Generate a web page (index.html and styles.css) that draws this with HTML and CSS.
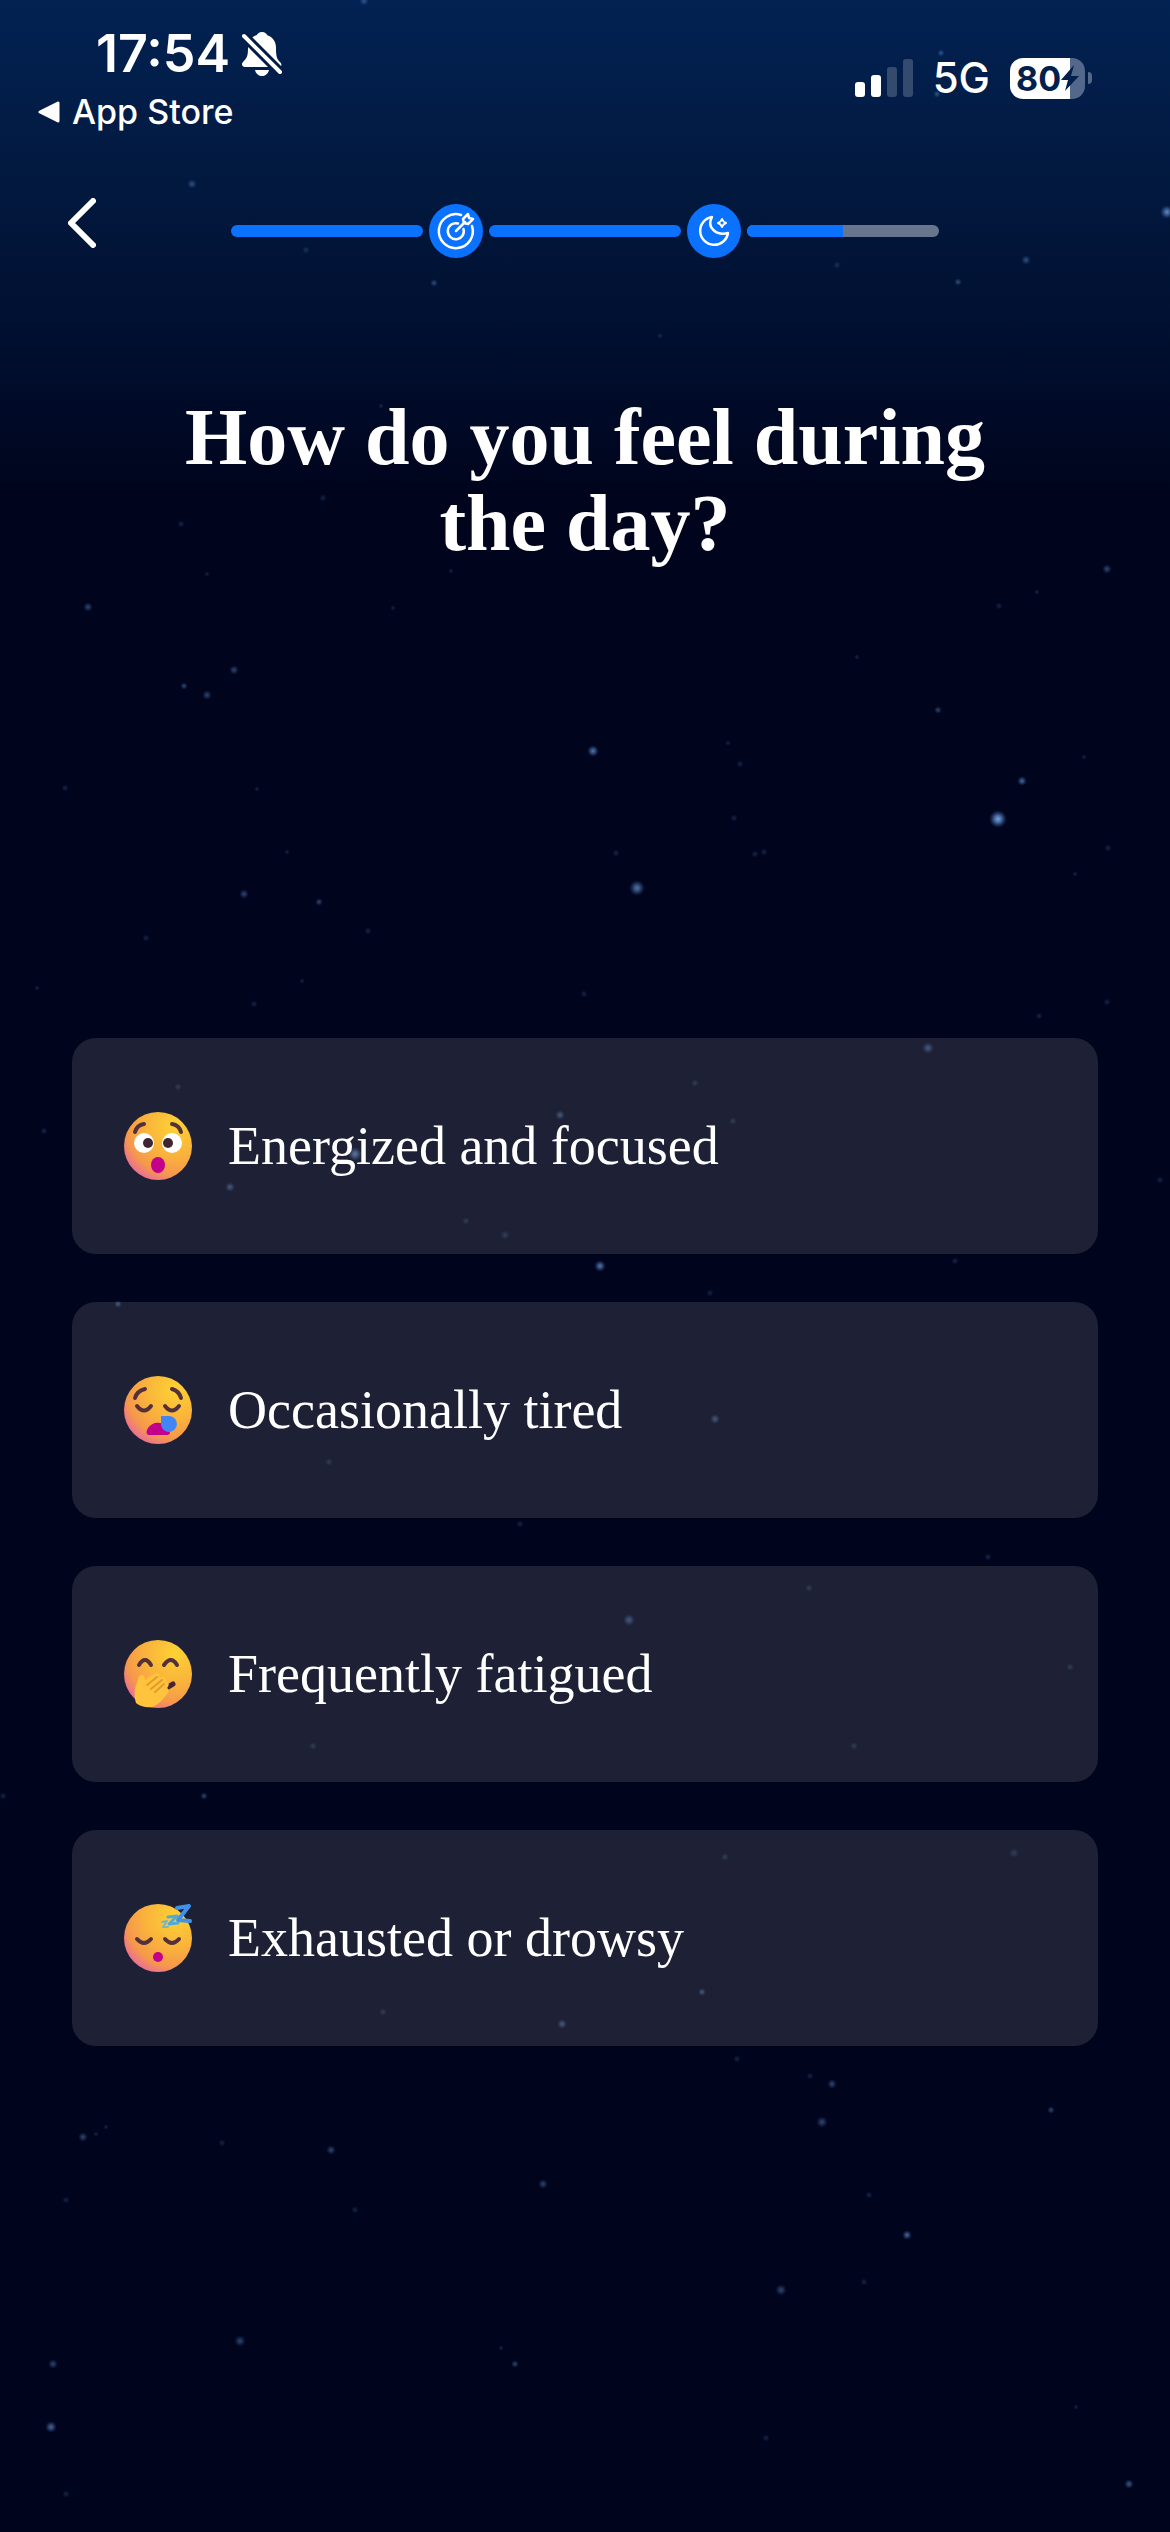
FILE: index.html
```
<!DOCTYPE html>
<html lang="en">
<head>
<meta charset="UTF-8">
<meta name="viewport" content="width=device-width, initial-scale=1.0">
<title>How do you feel during the day?</title>
<link rel="stylesheet" href="styles.css">
</head>
<body>
<!-- night sky -->
<svg class="sky" viewBox="0 0 1170 2532" preserveAspectRatio="xMidYMin slice" aria-hidden="true">
  <defs>
    <radialGradient id="glow">
      <stop offset="0" stop-color="#7fa6dc"/>
      <stop offset="0.4" stop-color="#5580bc" stop-opacity="0.8"/>
      <stop offset="1" stop-color="#2a4c8c" stop-opacity="0"/>
    </radialGradient>
  </defs>
  <g class="stars-big">
    <circle cx="998" cy="819" r="9"/><circle cx="637" cy="888" r="8" opacity="0.7"/>
    <circle cx="593" cy="751" r="6" opacity="0.7"/><circle cx="600" cy="1266" r="6" opacity="0.7"/>
    <circle cx="1167" cy="212" r="7" opacity="0.8"/><circle cx="51" cy="2427" r="6" opacity="0.6"/>
    <circle cx="355" cy="1154" r="7" opacity="0.6"/><circle cx="928" cy="1048" r="6" opacity="0.4"/>
    <circle cx="629" cy="1620" r="6" opacity="0.4"/><circle cx="1022" cy="781" r="5" opacity="0.6"/>
    <circle cx="907" cy="2235" r="5" opacity="0.6"/><circle cx="822" cy="2122" r="6" opacity="0.4"/>
    <circle cx="781" cy="2290" r="6" opacity="0.4"/><circle cx="240" cy="2341" r="6" opacity="0.4"/>
    <circle cx="1129" cy="2484" r="5" opacity="0.5"/>
  </g>
  <g class="stars-mid">
    <circle cx="364" cy="1" r="5"/><circle cx="192" cy="184" r="5"/><circle cx="941" cy="53" r="4"/>
    <circle cx="937" cy="94" r="4"/><circle cx="1026" cy="260" r="5"/><circle cx="958" cy="282" r="4"/>
    <circle cx="434" cy="283" r="4"/><circle cx="1107" cy="569" r="5"/><circle cx="88" cy="607" r="5"/>
    <circle cx="234" cy="670" r="5"/><circle cx="184" cy="686" r="4"/><circle cx="207" cy="695" r="5"/>
    <circle cx="938" cy="710" r="4"/><circle cx="244" cy="894" r="5"/><circle cx="319" cy="902" r="4"/>
    <circle cx="560" cy="1115" r="5"/><circle cx="230" cy="1187" r="5"/><circle cx="715" cy="1419" r="5"/>
    <circle cx="562" cy="2024" r="5"/><circle cx="702" cy="1992" r="4"/><circle cx="832" cy="2084" r="5"/>
    <circle cx="1051" cy="2110" r="4"/><circle cx="83" cy="2137" r="5"/><circle cx="331" cy="2150" r="5"/>
    <circle cx="543" cy="2184" r="5"/><circle cx="53" cy="2364" r="5"/><circle cx="515" cy="2364" r="4"/>
    <circle cx="204" cy="1796" r="4"/><circle cx="118" cy="1304" r="4"/>
  </g>
  <g class="stars-small">
    <circle cx="306" cy="250" r="4"/><circle cx="837" cy="265" r="4"/><circle cx="323" cy="498" r="4"/>
    <circle cx="660" cy="336" r="3"/><circle cx="381" cy="406" r="3"/><circle cx="181" cy="524" r="4"/>
    <circle cx="451" cy="571" r="3"/><circle cx="207" cy="574" r="3"/><circle cx="393" cy="608" r="3"/>
    <circle cx="999" cy="606" r="4"/><circle cx="1037" cy="592" r="3"/><circle cx="857" cy="657" r="3"/>
    <circle cx="728" cy="743" r="3"/><circle cx="740" cy="764" r="4"/><circle cx="1084" cy="757" r="3"/>
    <circle cx="65" cy="788" r="4"/><circle cx="257" cy="789" r="3"/><circle cx="734" cy="818" r="4"/>
    <circle cx="616" cy="853" r="4"/><circle cx="755" cy="854" r="4"/><circle cx="764" cy="852" r="4"/>
    <circle cx="1108" cy="848" r="4"/><circle cx="1075" cy="874" r="3"/><circle cx="287" cy="852" r="3"/>
    <circle cx="146" cy="938" r="4"/><circle cx="368" cy="931" r="4"/><circle cx="37" cy="988" r="3"/>
    <circle cx="254" cy="1004" r="4"/><circle cx="302" cy="981" r="3"/><circle cx="584" cy="994" r="4"/>
    <circle cx="1107" cy="1002" r="4"/><circle cx="1039" cy="1016" r="4"/><circle cx="44" cy="1131" r="4"/>
    <circle cx="1160" cy="1180" r="4"/><circle cx="466" cy="1221" r="4"/><circle cx="505" cy="1235" r="5"/>
    <circle cx="695" cy="1083" r="4"/><circle cx="733" cy="1121" r="4"/><circle cx="178" cy="1087" r="4"/>
    <circle cx="955" cy="1261" r="4"/><circle cx="710" cy="1293" r="4"/><circle cx="520" cy="1524" r="4"/>
    <circle cx="329" cy="1462" r="4"/><circle cx="988" cy="1557" r="4"/><circle cx="809" cy="1588" r="4"/>
    <circle cx="1070" cy="1667" r="4"/><circle cx="313" cy="1746" r="4"/><circle cx="854" cy="1746" r="4"/>
    <circle cx="3" cy="1796" r="4"/><circle cx="1014" cy="1853" r="5"/><circle cx="725" cy="1857" r="4"/>
    <circle cx="383" cy="2012" r="4"/><circle cx="737" cy="2059" r="4"/><circle cx="810" cy="2076" r="4"/>
    <circle cx="96" cy="2134" r="3"/><circle cx="106" cy="2127" r="3"/><circle cx="222" cy="2143" r="4"/>
    <circle cx="66" cy="2200" r="4"/><circle cx="355" cy="2210" r="4"/><circle cx="869" cy="2195" r="4"/>
    <circle cx="864" cy="2282" r="4"/><circle cx="501" cy="2348" r="3"/><circle cx="1076" cy="2407" r="3"/>
    <circle cx="766" cy="2438" r="4"/><circle cx="66" cy="2494" r="4"/>
  </g>
</svg>

<div class="page">
  <header class="status">
    <div class="status-left">
      <div class="clock">
        <time>17:54</time>
        <svg class="bell" viewBox="0 0 40 44" aria-label="Silent mode">
          <path d="M20 0c3 0 5 2 5 3 6 2 9 7 9 13 0 9 1 11 4 14 2 2 2 5-1 5H3c-3 0-4-3-2-5 4-4 5-6 5-14 0-6 3-11 9-13 0-1 2-3 5-3z" fill="#fff"/>
          <path d="M13 38h14c-1 4-4 6-7 6s-6-2-7-6z" fill="#fff"/>
          <path d="M-2 0l40 40" stroke="#021d49" stroke-width="10"/>
          <path d="M2 4l36 36" stroke="#fff" stroke-width="4" stroke-linecap="round"/>
        </svg>
      </div>
      <a class="back-app" href="#">
        <svg class="triangle" viewBox="0 0 22 22" aria-hidden="true"><path d="M20 2v18L2 11z" fill="#fff" stroke="#fff" stroke-width="3" stroke-linejoin="round"/></svg>
        App Store
      </a>
    </div>
    <div class="status-right">
      <svg class="signal" viewBox="0 0 58 38" fill="#fff" aria-label="Signal">
        <rect x="0" y="23" width="10" height="15" rx="3"/>
        <rect x="16" y="16" width="10" height="22" rx="3"/>
        <rect x="32" y="8" width="10" height="30" rx="3" opacity="0.2"/>
        <rect x="48" y="0" width="10" height="38" rx="3" opacity="0.2"/>
      </svg>
      <span class="network">5G</span>
      <div class="battery">
        <div class="battery-body">80<svg class="bolt" viewBox="0 0 18 26" aria-hidden="true"><path d="M13 0L0 15h7L4 26 18 11h-8z" fill="#02204c"/></svg></div>
        <div class="battery-tip"></div>
      </div>
    </div>
  </header>

  <nav class="topbar">
    <button class="back" type="button" aria-label="Back">
      <svg viewBox="0 0 28 50" fill="none" stroke="#fff" stroke-width="6" stroke-linecap="round" stroke-linejoin="round"><path d="M25 3L3 25l22 22"/></svg>
    </button>
    <div class="progress">
      <div class="segment"><div class="fill" style="width: 100%"></div></div>
      <div class="step">
        <svg viewBox="0 0 54 54" fill="none" stroke="#fff" stroke-width="2.500" stroke-linecap="round" stroke-linejoin="round" aria-hidden="true">
          <path d="M32 11a17 17 0 1 0 11 11"/>
          <path d="M29 19.500a8 8 0 1 0 5.500 5.500M27 27l9-9"/>
          <path d="M34 15l5-5 1 4 4 1-5 5-4-1z"/>
        </svg>
      </div>
      <div class="segment"><div class="fill" style="width: 100%"></div></div>
      <div class="step">
        <svg viewBox="0 0 54 54" fill="none" stroke="#fff" stroke-width="2.500" stroke-linecap="round" stroke-linejoin="round" aria-hidden="true">
          <path d="M25 13A14 14 0 1 0 41 29C30 32 19 24 25 13z"/>
          <path d="M35 15q1 3 4 4-3 1-4 4-1-3-4-4 3-1 4-4z" stroke-width="2"/>
        </svg>
      </div>
      <div class="segment"><div class="fill" style="width: 50%"></div></div>
    </div>
  </nav>

  <main>
    <h1>How do you feel during the day?</h1>

    <div class="options">
      <button class="option" type="button">
        <svg class="emoji" viewBox="0 0 76 76" aria-hidden="true">
          <defs>
            <radialGradient id="face" cx="0.75" cy="0.2" r="0.9">
              <stop offset="0" stop-color="#fdd233"/>
              <stop offset="0.5" stop-color="#fab23c"/>
              <stop offset="0.8" stop-color="#f6984c"/>
              <stop offset="1" stop-color="#ea6c98"/>
            </radialGradient>
          </defs>
          <circle cx="38" cy="38" r="34" fill="url(#face)"/>
          <g class="line"><path d="M15 24q2-7 9-8M52 16q7 1 9 8"/></g>
          <circle cx="24" cy="35" r="10" fill="#fff"/><circle cx="52" cy="35" r="10" fill="#fff"/>
          <circle cx="28" cy="35" r="5" fill="#3f2432"/><circle cx="48" cy="35" r="5" fill="#3f2432"/>
          <ellipse cx="38" cy="57" rx="7" ry="8" fill="#c3008c"/>
        </svg>
        Energized and focused
      </button>
      <button class="option" type="button">
        <svg class="emoji" viewBox="0 0 76 76" aria-hidden="true">
          <circle cx="38" cy="38" r="34" fill="url(#face)"/>
          <g class="line"><path d="M15 26q2-7 10-9M52 17q7 2 9 9"/><path d="M17 34q7 9 14 0M45 34q7 9 14 0"/></g>
          <path d="M29 63c-3 0-3-4-1-7 3-4 7-6 12-5 5 0 9 4 10 9 0 2-1 3-3 3z" fill="#c3008c"/>
          <path d="M41 44h9a8 8 0 1 1-9 9z" fill="#4286f5"/>
        </svg>
        Occasionally tired
      </button>
      <button class="option" type="button">
        <svg class="emoji" viewBox="0 0 76 76" aria-hidden="true">
          <circle cx="38" cy="38" r="34" fill="url(#face)"/>
          <g class="line"><path d="M19 29q6-10 12 0M44 29q7-10 13 0"/></g>
          <path d="M48 51l5-3" stroke="#4a2333" stroke-width="5" stroke-linecap="round"/>
          <path d="M16 67c-2-7-2-14 1-20 1-4 2-8 4-8 3 0 4 2 4 5l9-6c4-2 7 1 4 4l4-1c4-1 6 3 3 5 4 0 5 3 2 6 2 1 2 4 0 6-4 5-7 9-12 12-4 2-13 2-19-3z" fill="#ffc43b"/>
          <path d="M27 49l10-8M31 53l11-9M35 56l9-8" stroke="#e39a30" stroke-width="2" stroke-linecap="round" fill="none"/>
        </svg>
        Frequently fatigued
      </button>
      <button class="option" type="button">
        <svg class="emoji" viewBox="0 0 76 76" aria-hidden="true">
          <circle cx="38" cy="38" r="34" fill="url(#face)"/>
          <g class="line"><path d="M17 39q7 8 14 0M45 39q7 8 14 0"/></g>
          <circle cx="38" cy="57" r="5" fill="#c3008c"/>
          <g fill="none" stroke-linejoin="round" stroke-linecap="round">
            <path d="M42 22l5-1-4 6h5" stroke="#7bb6c2" stroke-width="2"/>
            <path d="M48 17l9-1-8 8 9-1" stroke="#50aadc" stroke-width="3"/>
            <path d="M57 8l12-2-11 14 12 1" stroke="#3f92e8" stroke-width="4"/>
          </g>
        </svg>
        Exhausted or drowsy
      </button>
    </div>
  </main>
</div>
</body>
</html>
```

FILE: styles.css
```
* {
  box-sizing: border-box;
}
body {
  margin: 0;
  min-height: 100vh;
  position: relative;
  overflow-x: hidden;
  color: #fff;
  font-family: Inter, "Liberation Sans", sans-serif;
  background: #00041c linear-gradient(#022253, #02193f 180px, #000d2c 370px, #00041c 500px) no-repeat;
}
button {
  border: none;
  padding: 0;
  color: inherit;
  cursor: pointer;
}

/* stars behind the content */
.sky {
  position: absolute;
  inset: 0;
  width: 100%;
  height: 100%;
}
.sky circle {
  fill: url(#glow);
}
.stars-mid {
  opacity: 0.4;
}
.stars-small {
  opacity: 0.2;
}
.page {
  position: relative;
}

/* status bar */
.status {
  display: flex;
  justify-content: space-between;
  align-items: flex-start;
  padding: 24px 78px 0 38px;
}
.clock {
  display: flex;
  align-items: center;
  gap: 12px;
  padding-left: 58px;
  font-size: 52px;
  font-weight: 600;
  line-height: 60px;
}
.bell {
  width: 40px;
  height: 44px;
}
.back-app {
  display: flex;
  align-items: center;
  gap: 12px;
  margin-top: 8px;
  color: #fff;
  font-size: 34px;
  font-weight: 500;
  line-height: 40px;
  text-decoration: none;
}
.triangle {
  width: 22px;
  height: 22px;
}
.status-right {
  display: flex;
  align-items: center;
  gap: 20px;
  padding-top: 32px;
}
.signal {
  width: 58px;
  height: 38px;
}
.network {
  font-size: 42px;
  font-weight: 500;
  line-height: 44px;
}
.battery {
  display: flex;
  align-items: center;
  gap: 3px;
}
.battery-body {
  display: flex;
  align-items: center;
  width: 75px;
  height: 41px;
  padding-left: 6px;
  border-radius: 13px;
  background: linear-gradient(90deg, #fff 80%, #53688a 80%);
  color: #02204c;
  font-size: 34px;
  font-weight: 700;
}
.bolt {
  flex: none;
  width: 18px;
  height: 26px;
}
.battery-tip {
  width: 4px;
  height: 12px;
  border-radius: 0 6px 6px 0;
  background: #53688a;
}

/* back button and progress */
.topbar {
  display: grid;
  grid-template-columns: 163px 1fr 163px;
  align-items: center;
  padding: 66px 68px 0;
}
.back {
  width: 28px;
  height: 50px;
  margin-bottom: 16px;
  background: none;
}
.back svg {
  display: block;
}
.progress {
  display: flex;
  align-items: center;
  gap: 6px;
}
.segment {
  flex: 1;
  height: 12px;
  border-radius: 6px;
  background: #67758d;
  overflow: hidden;
}
.fill {
  height: 100%;
  background: #0a72ff;
}
.step {
  width: 54px;
  height: 54px;
  border-radius: 50%;
  background: #0a72ff;
}

/* question */
main {
  padding: 0 72px 72px;
}
h1 {
  max-width: 880px;
  margin: 130px auto 472px;
  font-family: "Liberation Serif", serif;
  font-size: 80px;
  line-height: 86px;
  text-align: center;
}
.options {
  display: flex;
  flex-direction: column;
  gap: 48px;
}
.option {
  display: flex;
  align-items: center;
  gap: 32px;
  min-height: 216px;
  padding: 0 48px;
  border-radius: 24px;
  background: rgba(250, 250, 240, 0.12);
  font-family: "Liberation Serif", serif;
  font-size: 54px;
  text-align: left;
}
.emoji {
  flex: none;
  width: 76px;
  height: 76px;
}
.line {
  fill: none;
  stroke: #53303a;
  stroke-width: 4;
  stroke-linecap: round;
}
```
